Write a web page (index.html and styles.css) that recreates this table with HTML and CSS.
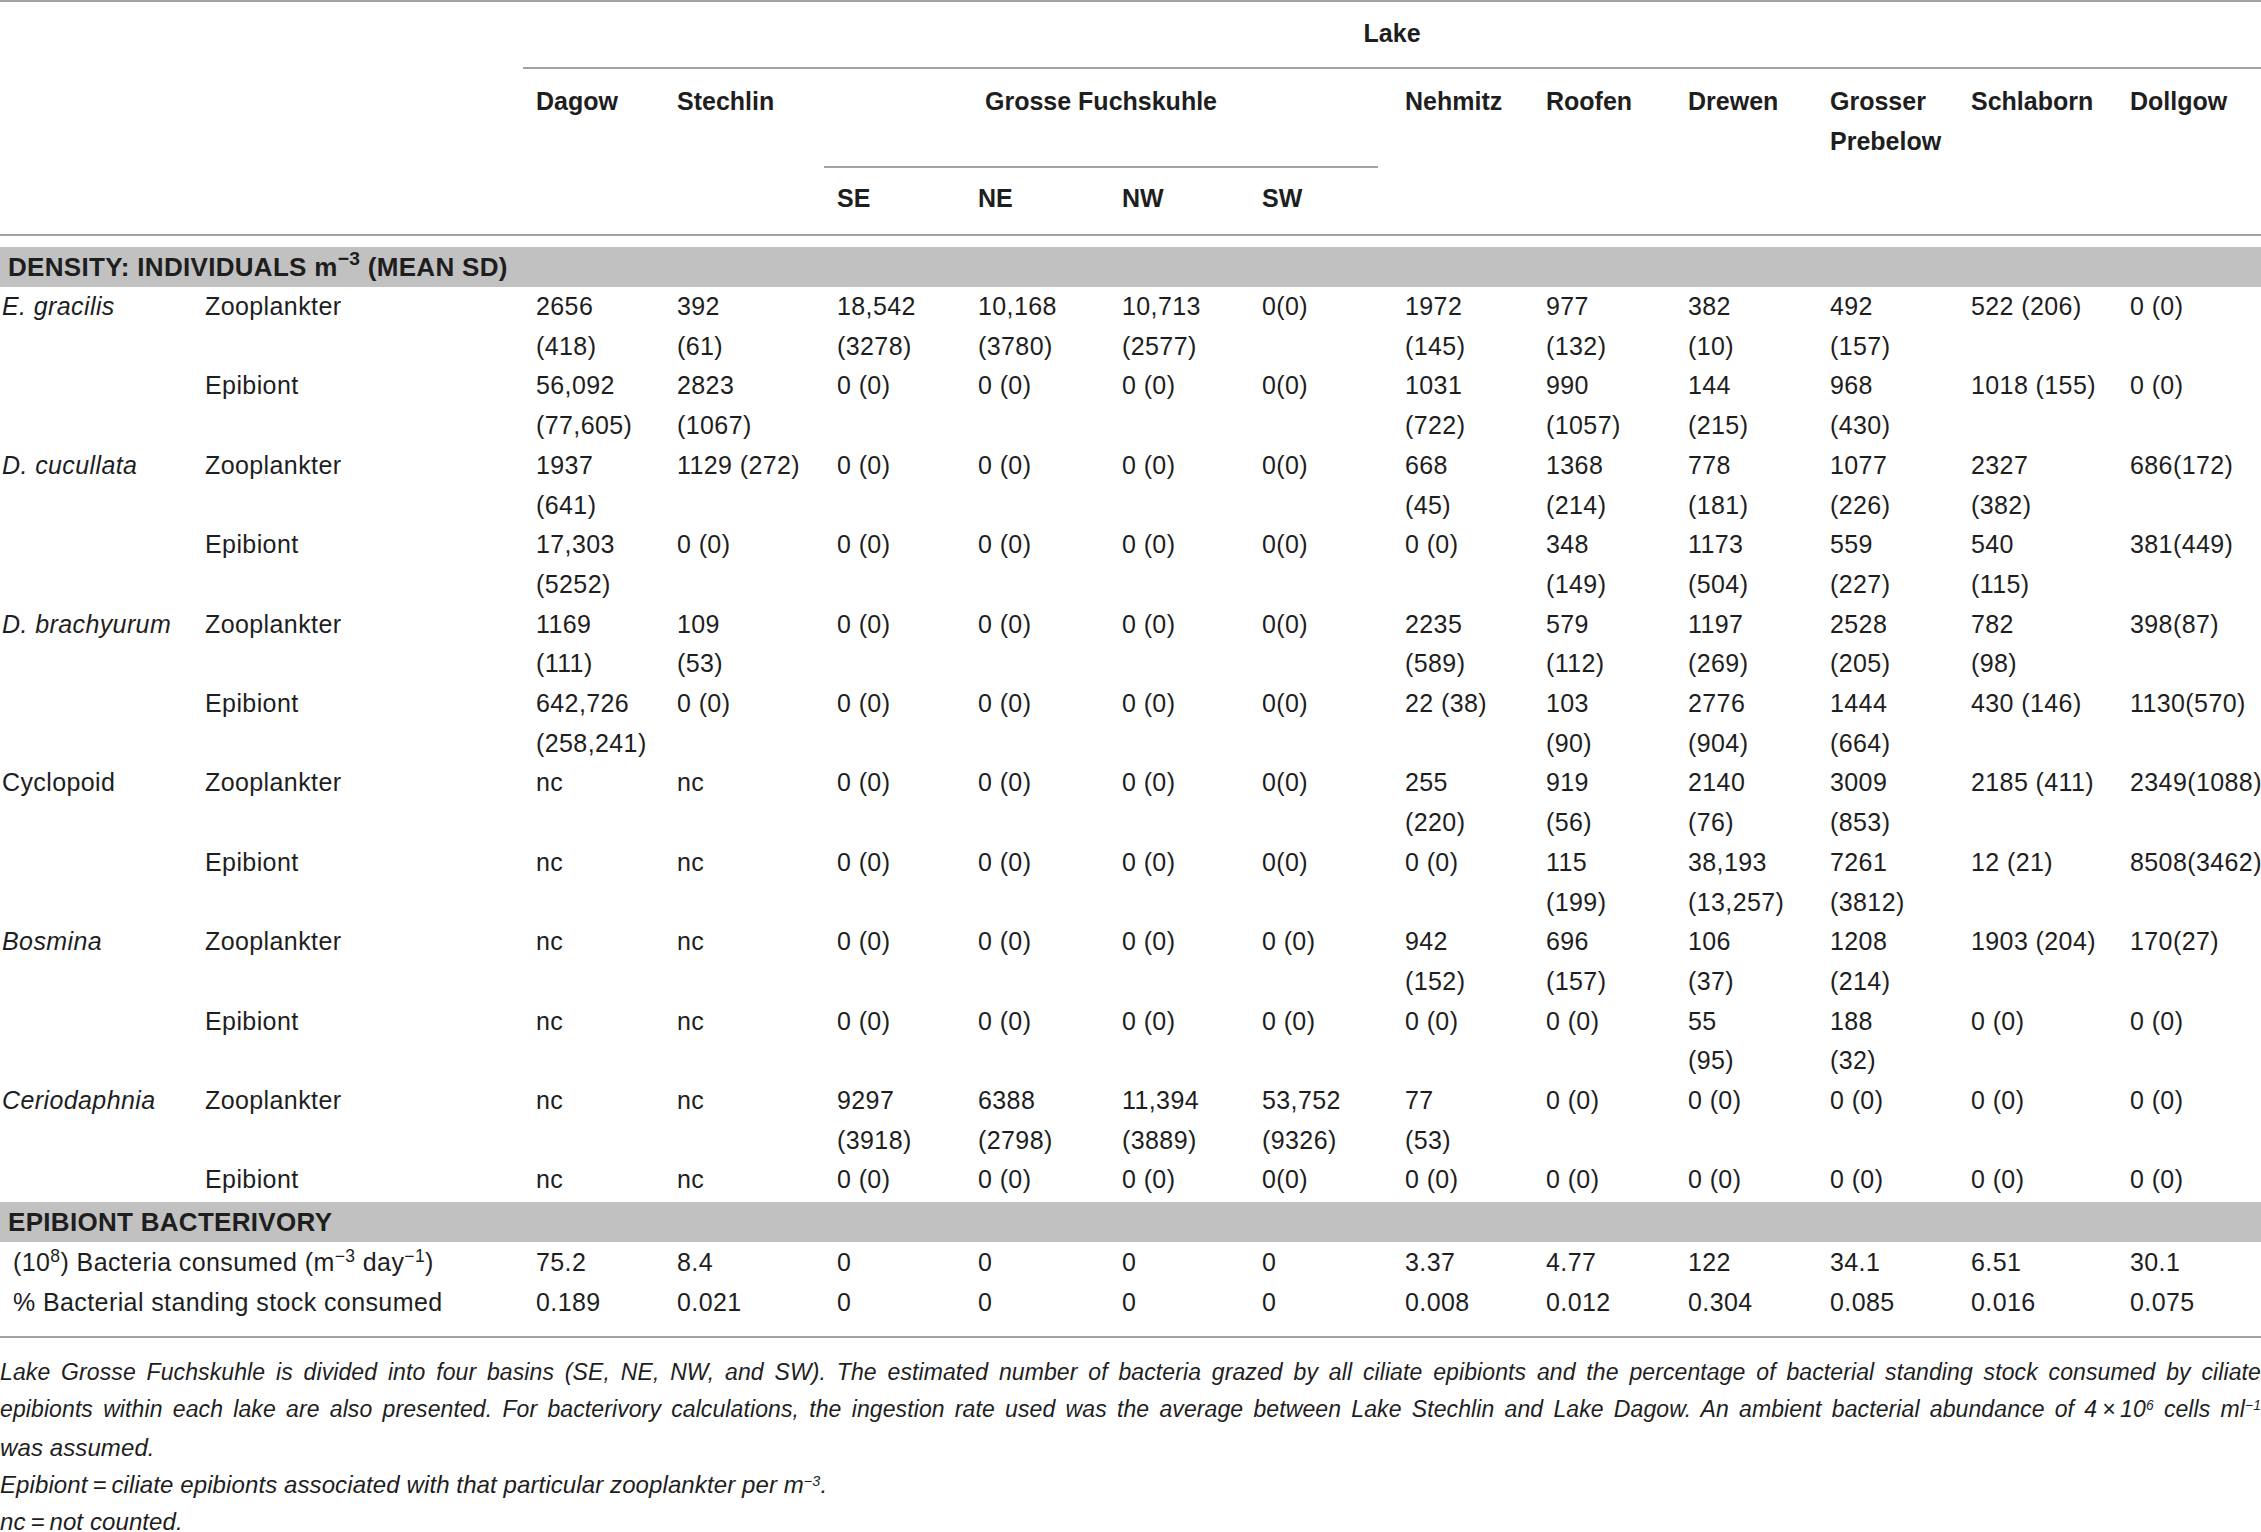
FILE: index.html
```html
<!DOCTYPE html>
<html lang="en">
<head>
<meta charset="utf-8">
<title>Table</title>
<link rel="stylesheet" href="styles.css">
</head>
<body>
<table class="tbl">
  <colgroup>
    <col class="w-sp"><col class="w-role">
    <col class="w141"><col class="w160"><col class="w141"><col class="w144"><col class="w140"><col class="w143">
    <col class="w141"><col class="w142"><col class="w142"><col class="w141"><col class="w159"><col class="w144">
  </colgroup>
  <thead>
    <tr>
      <th class="corner hb" colspan="2" rowspan="3"></th>
      <th class="lake" colspan="12">Lake</th>
    </tr>
    <tr>
      <th class="hd hb" rowspan="2">Dagow</th>
      <th class="hd hb" rowspan="2">Stechlin</th>
      <th class="grosse" colspan="4">Grosse Fuchskuhle</th>
      <th class="hd hb" rowspan="2">Nehmitz</th>
      <th class="hd hb" rowspan="2">Roofen</th>
      <th class="hd hb" rowspan="2">Drewen</th>
      <th class="hd hb" rowspan="2">Grosser<br>Prebelow</th>
      <th class="hd hb" rowspan="2">Schlaborn</th>
      <th class="hd hb" rowspan="2">Dollgow</th>
    </tr>
    <tr>
      <th class="sub hb">SE</th>
      <th class="sub hb">NE</th>
      <th class="sub hb">NW</th>
      <th class="sub hb">SW</th>
    </tr>
  </thead>
  <tbody>
    <tr><th class="band band-first" colspan="14">DENSITY: INDIVIDUALS m<sup>−3</sup> (MEAN SD)</th></tr>

    <tr>
      <td class="sp" rowspan="2"><i>E. gracilis</i></td><td class="role">Zooplankter</td>
      <td>2656<br>(418)</td><td>392<br>(61)</td><td>18,542<br>(3278)</td><td>10,168<br>(3780)</td><td>10,713<br>(2577)</td><td>0(0)</td>
      <td>1972<br>(145)</td><td>977<br>(132)</td><td>382<br>(10)</td><td>492<br>(157)</td><td>522 (206)</td><td>0 (0)</td>
    </tr>
    <tr>
      <td class="role">Epibiont</td>
      <td>56,092<br>(77,605)</td><td>2823<br>(1067)</td><td>0 (0)</td><td>0 (0)</td><td>0 (0)</td><td>0(0)</td>
      <td>1031<br>(722)</td><td>990<br>(1057)</td><td>144<br>(215)</td><td>968<br>(430)</td><td>1018 (155)</td><td>0 (0)</td>
    </tr>

    <tr>
      <td class="sp" rowspan="2"><i>D. cucullata</i></td><td class="role">Zooplankter</td>
      <td>1937<br>(641)</td><td>1129 (272)</td><td>0 (0)</td><td>0 (0)</td><td>0 (0)</td><td>0(0)</td>
      <td>668<br>(45)</td><td>1368<br>(214)</td><td>778<br>(181)</td><td>1077<br>(226)</td><td>2327<br>(382)</td><td>686(172)</td>
    </tr>
    <tr>
      <td class="role">Epibiont</td>
      <td>17,303<br>(5252)</td><td>0 (0)</td><td>0 (0)</td><td>0 (0)</td><td>0 (0)</td><td>0(0)</td>
      <td>0 (0)</td><td>348<br>(149)</td><td>1173<br>(504)</td><td>559<br>(227)</td><td>540<br>(115)</td><td>381(449)</td>
    </tr>

    <tr>
      <td class="sp" rowspan="2"><i>D. brachyurum</i></td><td class="role">Zooplankter</td>
      <td>1169<br>(111)</td><td>109<br>(53)</td><td>0 (0)</td><td>0 (0)</td><td>0 (0)</td><td>0(0)</td>
      <td>2235<br>(589)</td><td>579<br>(112)</td><td>1197<br>(269)</td><td>2528<br>(205)</td><td>782<br>(98)</td><td>398(87)</td>
    </tr>
    <tr>
      <td class="role">Epibiont</td>
      <td>642,726<br>(258,241)</td><td>0 (0)</td><td>0 (0)</td><td>0 (0)</td><td>0 (0)</td><td>0(0)</td>
      <td>22 (38)</td><td>103<br>(90)</td><td>2776<br>(904)</td><td>1444<br>(664)</td><td>430 (146)</td><td>1130(570)</td>
    </tr>

    <tr>
      <td class="sp" rowspan="2">Cyclopoid</td><td class="role">Zooplankter</td>
      <td>nc</td><td>nc</td><td>0 (0)</td><td>0 (0)</td><td>0 (0)</td><td>0(0)</td>
      <td>255<br>(220)</td><td>919<br>(56)</td><td>2140<br>(76)</td><td>3009<br>(853)</td><td>2185 (411)</td><td>2349(1088)</td>
    </tr>
    <tr>
      <td class="role">Epibiont</td>
      <td>nc</td><td>nc</td><td>0 (0)</td><td>0 (0)</td><td>0 (0)</td><td>0(0)</td>
      <td>0 (0)</td><td>115<br>(199)</td><td>38,193<br>(13,257)</td><td>7261<br>(3812)</td><td>12 (21)</td><td>8508(3462)</td>
    </tr>

    <tr>
      <td class="sp" rowspan="2"><i>Bosmina</i></td><td class="role">Zooplankter</td>
      <td>nc</td><td>nc</td><td>0 (0)</td><td>0 (0)</td><td>0 (0)</td><td>0 (0)</td>
      <td>942<br>(152)</td><td>696<br>(157)</td><td>106<br>(37)</td><td>1208<br>(214)</td><td>1903 (204)</td><td>170(27)</td>
    </tr>
    <tr>
      <td class="role">Epibiont</td>
      <td>nc</td><td>nc</td><td>0 (0)</td><td>0 (0)</td><td>0 (0)</td><td>0 (0)</td>
      <td>0 (0)</td><td>0 (0)</td><td>55<br>(95)</td><td>188<br>(32)</td><td>0 (0)</td><td>0 (0)</td>
    </tr>

    <tr>
      <td class="sp" rowspan="2"><i>Ceriodaphnia</i></td><td class="role">Zooplankter</td>
      <td>nc</td><td>nc</td><td>9297<br>(3918)</td><td>6388<br>(2798)</td><td>11,394<br>(3889)</td><td>53,752<br>(9326)</td>
      <td>77<br>(53)</td><td>0 (0)</td><td>0 (0)</td><td>0 (0)</td><td>0 (0)</td><td>0 (0)</td>
    </tr>
    <tr>
      <td class="role">Epibiont</td>
      <td>nc</td><td>nc</td><td>0 (0)</td><td>0 (0)</td><td>0 (0)</td><td>0(0)</td>
      <td>0 (0)</td><td>0 (0)</td><td>0 (0)</td><td>0 (0)</td><td>0 (0)</td><td>0 (0)</td>
    </tr>

    <tr><th class="band band-second" colspan="14">EPIBIONT BACTERIVORY</th></tr>

    <tr>
      <td class="lbl" colspan="2">(10<sup>8</sup>) Bacteria consumed (m<sup>−3</sup> day<sup>−1</sup>)</td>
      <td>75.2</td><td>8.4</td><td>0</td><td>0</td><td>0</td><td>0</td>
      <td>3.37</td><td>4.77</td><td>122</td><td>34.1</td><td>6.51</td><td>30.1</td>
    </tr>
    <tr class="last">
      <td class="lbl" colspan="2">% Bacterial standing stock consumed</td>
      <td>0.189</td><td>0.021</td><td>0</td><td>0</td><td>0</td><td>0</td>
      <td>0.008</td><td>0.012</td><td>0.304</td><td>0.085</td><td>0.016</td><td>0.075</td>
    </tr>
  </tbody>
</table>

<div class="notes">
  <div class="ln just">Lake Grosse Fuchskuhle is divided into four basins (SE, NE, NW, and SW). The estimated number of bacteria grazed by all ciliate epibionts and the percentage of bacterial standing stock consumed by ciliate</div>
  <div class="ln just">epibionts within each lake are also presented. For bacterivory calculations, the ingestion rate used was the average between Lake Stechlin and Lake Dagow. An ambient bacterial abundance of 4&thinsp;×&thinsp;10<sup>6</sup> cells ml<sup>−1</sup></div>
  <div class="ln">was assumed.</div>
  <div class="ln">Epibiont&thinsp;=&thinsp;ciliate epibionts associated with that particular zooplankter per m<sup>−3</sup>.</div>
  <div class="ln">nc&thinsp;=&thinsp;not counted.</div>
</div>
</body>
</html>
```

FILE: styles.css
```css
html, body {
  margin: 0;
  padding: 0;
  background: #ffffff;
}

body {
  width: 2261px;
  font-family: "Liberation Sans", Arial, Helvetica, sans-serif;
  color: #1e1e1e;
  overflow: hidden;
}

.tbl {
  width: 2261px;
  table-layout: fixed;
  border-collapse: separate;
  border-spacing: 0;
  border-top: 2px solid #a3a3a3;
  font-size: 25px;
  letter-spacing: 0.4px;
}

.w-sp { width: 203px; }
.w-role { width: 320px; }
.w140 { width: 140px; }
.w141 { width: 141px; }
.w142 { width: 142px; }
.w143 { width: 143px; }
.w144 { width: 144px; }
.w159 { width: 159px; }
.w160 { width: 160px; }

th, td {
  padding: 0 2px 0 13px;
  text-align: left;
  vertical-align: top;
  white-space: nowrap;
  line-height: 39.7px;
}

thead th {
  font-weight: bold;
  letter-spacing: 0;
  line-height: 40px;
}

.hb {
  border-bottom: 2px solid #a3a3a3;
}

.corner {
  padding: 0;
}

.lake {
  text-align: center;
  padding: 11px 0 14px 0;
  border-bottom: 2px solid #a3a3a3;
}

.hd {
  padding-top: 12px;
}

.grosse {
  text-align: center;
  padding: 12px 14px 47px 0;
  background-image: linear-gradient(#a3a3a3, #a3a3a3);
  background-repeat: no-repeat;
  background-size: calc(100% - 14px) 2px;
  background-position: left bottom;
}

.sub {
  padding-top: 10px;
  padding-bottom: 16px;
}

.band {
  background: #c1c1c1;
  background-clip: padding-box;
  font-weight: bold;
  font-size: 26px;
  letter-spacing: 0.3px;
  padding-left: 8px;
  line-height: 40px;
  border-top: 11px solid transparent;
}

.band-second {
  border-top-width: 2px;
}

.band sup {
  font-size: 0.74em;
  vertical-align: 0.55em;
}

td.sp {
  padding-left: 2px;
}

td.role {
  padding-left: 2px;
}

td.lbl {
  padding-left: 13px;
}

tbody tr:nth-last-child(-n+2) td {
  line-height: 40px;
}

tr.last td {
  padding-bottom: 14px;
  border-bottom: 2px solid #a3a3a3;
}

sup {
  font-size: 0.7em;
  line-height: 0;
  vertical-align: 0.5em;
}

.notes {
  margin-top: 16px;
  font-style: italic;
  font-size: 24px;
  line-height: 37.3px;
  letter-spacing: 0.1px;
}

.ln {
  white-space: nowrap;
}

.ln.just {
  font-size: 23px;
  text-align: justify;
  text-align-last: justify;
}

.notes sup {
  font-size: 0.6em;
}
```
